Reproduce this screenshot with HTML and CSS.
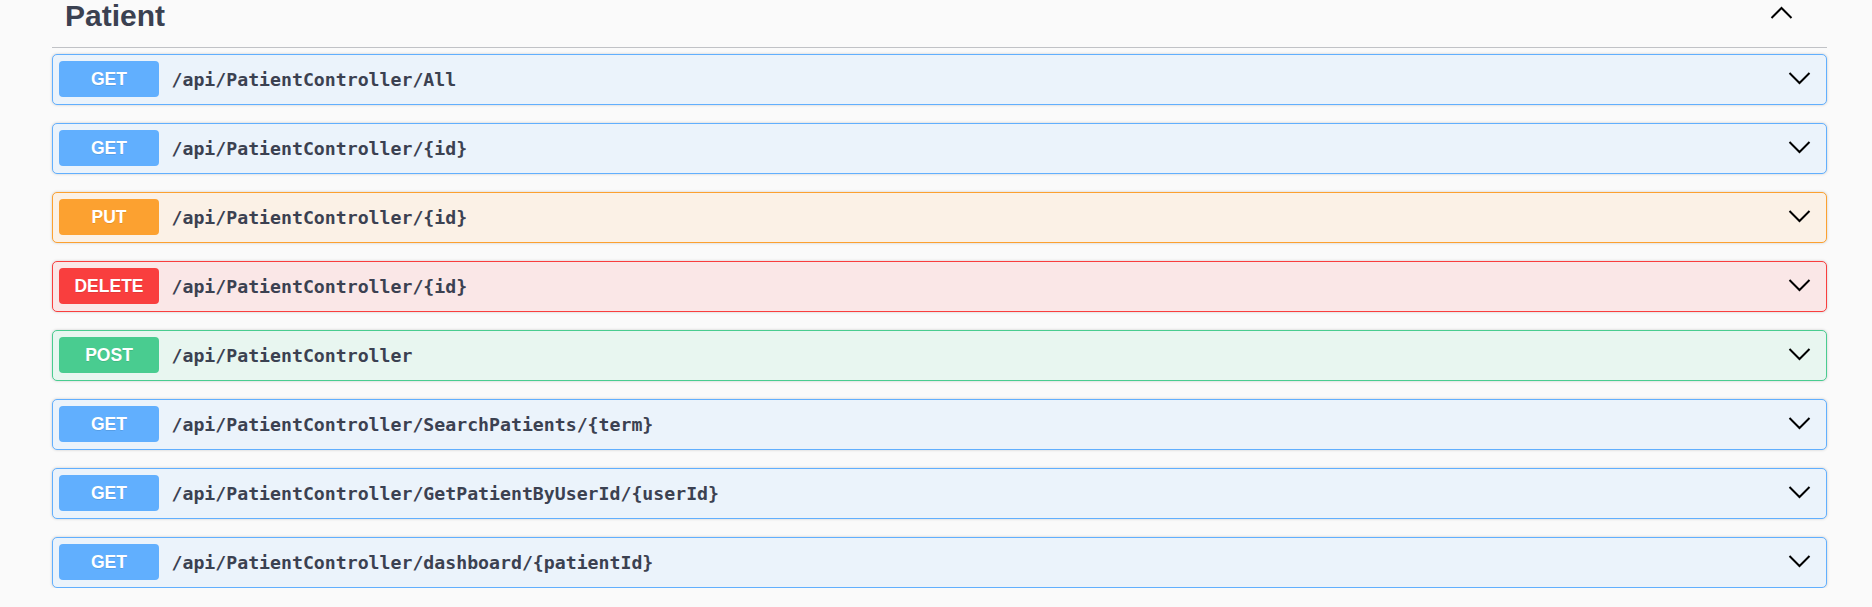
FILE: index.html
```html
<!DOCTYPE html>
<html>
<head>
<meta charset="utf-8">
<link rel="stylesheet" href="styles.css">
</head>
<body>
<div class="section">
  <div class="tag">
    <span class="tag-title">Patient</span>
    <svg class="tag-arrow" width="25" height="14" viewBox="0 0 25 14"><polyline points="2.5,12 12.5,2 22.5,12" fill="none" stroke="#000" stroke-width="2"/></svg>
  </div>
  <div class="ops">
    <div class="op get"><span class="method">GET</span><span class="path">/api/PatientController/All</span><svg class="arrow" width="25" height="14" viewBox="0 0 25 14"><polyline points="2.5,2 12.5,12 22.5,2" fill="none" stroke="#000" stroke-width="2"/></svg></div>
    <div class="op get"><span class="method">GET</span><span class="path">/api/PatientController/{id}</span><svg class="arrow" width="25" height="14" viewBox="0 0 25 14"><polyline points="2.5,2 12.5,12 22.5,2" fill="none" stroke="#000" stroke-width="2"/></svg></div>
    <div class="op put"><span class="method">PUT</span><span class="path">/api/PatientController/{id}</span><svg class="arrow" width="25" height="14" viewBox="0 0 25 14"><polyline points="2.5,2 12.5,12 22.5,2" fill="none" stroke="#000" stroke-width="2"/></svg></div>
    <div class="op delete"><span class="method">DELETE</span><span class="path">/api/PatientController/{id}</span><svg class="arrow" width="25" height="14" viewBox="0 0 25 14"><polyline points="2.5,2 12.5,12 22.5,2" fill="none" stroke="#000" stroke-width="2"/></svg></div>
    <div class="op post"><span class="method">POST</span><span class="path">/api/PatientController</span><svg class="arrow" width="25" height="14" viewBox="0 0 25 14"><polyline points="2.5,2 12.5,12 22.5,2" fill="none" stroke="#000" stroke-width="2"/></svg></div>
    <div class="op get"><span class="method">GET</span><span class="path">/api/PatientController/SearchPatients/{term}</span><svg class="arrow" width="25" height="14" viewBox="0 0 25 14"><polyline points="2.5,2 12.5,12 22.5,2" fill="none" stroke="#000" stroke-width="2"/></svg></div>
    <div class="op get"><span class="method">GET</span><span class="path">/api/PatientController/GetPatientByUserId/{userId}</span><svg class="arrow" width="25" height="14" viewBox="0 0 25 14"><polyline points="2.5,2 12.5,12 22.5,2" fill="none" stroke="#000" stroke-width="2"/></svg></div>
    <div class="op get"><span class="method">GET</span><span class="path">/api/PatientController/dashboard/{patientId}</span><svg class="arrow" width="25" height="14" viewBox="0 0 25 14"><polyline points="2.5,2 12.5,12 22.5,2" fill="none" stroke="#000" stroke-width="2"/></svg></div>
  </div>
</div>
</body>
</html>
```
FILE: styles.css
```css
html, body {
  margin: 0;
  padding: 0;
  background: #fafafa;
  overflow: hidden;
}
body {
  font-family: "Liberation Sans", Arial, sans-serif;
  color: #3b4151;
}
.section {
  width: 1775px;
  margin-left: 52px;
}
.tag {
  display: flex;
  align-items: flex-start;
  height: 47px;
  border-bottom: 1px solid rgba(59, 65, 81, 0.3);
  padding-left: 13px;
}
.tag-title {
  font-size: 30px;
  line-height: 30px;
  font-weight: bold;
  padding-top: 1px;
  flex: 1;
}
.tag-arrow {
  margin-top: 6px;
  margin-right: 33px;
}
.ops {
  display: flex;
  flex-direction: column;
  gap: 18.5px;
  padding-top: 6px;
}
.op {
  display: flex;
  align-items: center;
  height: 48.5px;
  padding: 0 0 0 6px;
  border: 1px solid;
  border-radius: 5px;
  box-shadow: 0 0 3px rgba(0, 0, 0, 0.19);
}
.method {
  width: 100px;
  height: 36px;
  line-height: 36px;
  text-align: center;
  font-size: 17.5px;
  font-weight: bold;
  color: #fff;
  border-radius: 4px;
  text-shadow: 0 1px 0 rgba(0, 0, 0, 0.1);
}
.path {
  flex: 1;
  padding-left: 12.5px;
  font-family: "DejaVu Sans Mono", monospace;
  font-size: 18.2px;
  font-weight: bold;
  color: #3b4151;
}
.arrow {
  margin-right: 14px;
  margin-bottom: 3px;
}
.get { background: #ebf3fb; border-color: #61affe; }
.get .method { background: #61affe; }
.put { background: #fbf1e6; border-color: #fca130; }
.put .method { background: #fca130; }
.delete { background: #fae7e7; border-color: #f93e3e; }
.delete .method { background: #f93e3e; }
.post { background: #e8f6f0; border-color: #49cc90; }
.post .method { background: #49cc90; }
```
